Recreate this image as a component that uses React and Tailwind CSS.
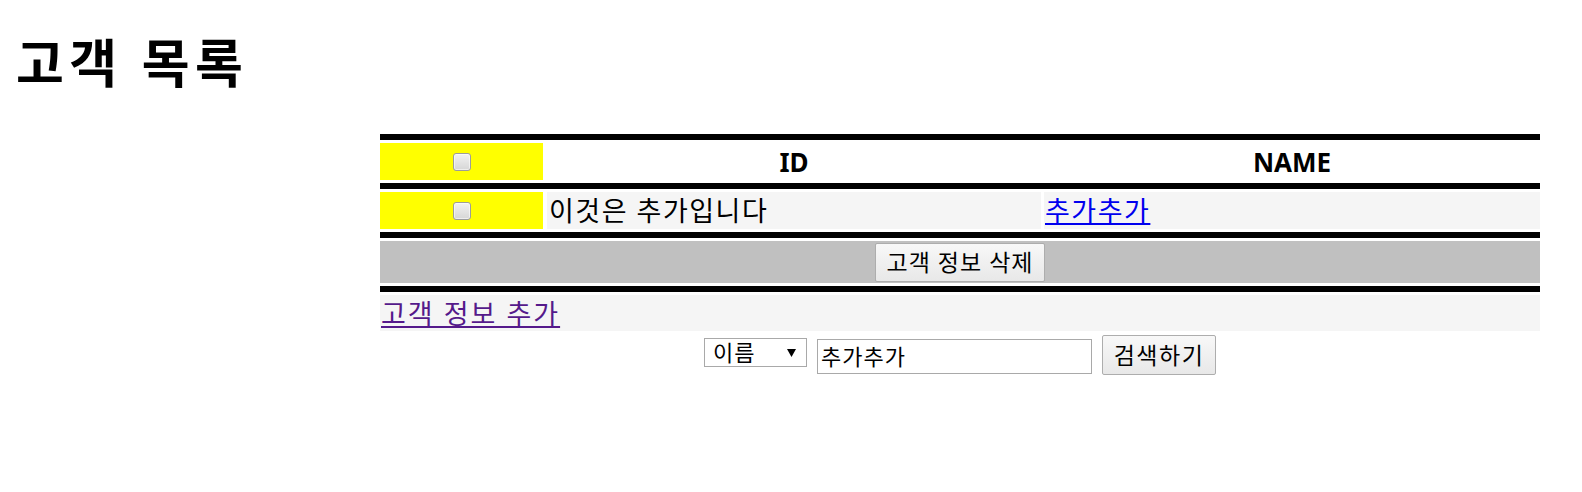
import { useState } from "react";

const Checkbox = () => (
  <span className="block w-[18px] h-[18px] rounded-[3px] border border-[#9c9c9c] bg-linear-to-b from-[#f2f2f2] to-[#d6d6d6] shadow-[inset_0_0_0_1px_rgba(255,255,255,0.55)]" />
);

const Bar = () => <div className="h-[6px] bg-black" />;

export default function App() {
  const [field] = useState("이름");
  const [keyword] = useState("추가추가");

  return (
    <div className="min-h-[492px] bg-white text-black font-['Noto_Sans','Noto_Sans_CJK_KR',sans-serif]">
      {/* title */}
      <div className="pt-[37px] pl-[16px]">
        <h1 className="text-[52px] leading-[52px] font-bold tracking-[5.5px]">고객 목록</h1>
      </div>

      {/* customer table */}
      <div className="mt-[45px] ml-[380px] w-[1160px] flex flex-col gap-[3px]">
        <Bar />
        <div className="h-[37px] flex">
          <div className="w-[163px] bg-[#ffff00] flex items-center justify-center">
            <Checkbox />
          </div>
          <div className="ml-[4px] flex-1 flex items-center justify-center pt-[2px] text-[26px] font-bold">ID</div>
          <div className="ml-[3px] w-[496px] flex items-center justify-center pt-[2px] text-[26px] font-bold">NAME</div>
        </div>

        <Bar />
        <div className="h-[37px] flex text-[27px] tracking-[1.5px]">
          <div className="w-[163px] bg-[#ffff00] flex items-center justify-center">
            <Checkbox />
          </div>
          <div className="ml-[4px] flex-1 bg-[#f5f5f5] flex items-center pl-[2px] pt-[2px]">이것은 추가입니다</div>
          <div className="ml-[3px] w-[496px] bg-[#f5f5f5] flex items-center pl-[1px] pt-[2px]">
            <a href="#" className="text-[#0000ee] underline">추가추가</a>
          </div>
        </div>

        <Bar />
        <div className="h-[42px] bg-[#c0c0c0] flex items-center justify-center">
          <button className="w-[170px] h-[39px] mt-[1px] text-[23px] tracking-[1px] border border-[#adadad] rounded-[2px] bg-linear-to-b from-[#f8f8f8] to-[#e8e8e8]">
            고객 정보 삭제
          </button>
        </div>

        <Bar />
        <div className="h-[36px] bg-[#f5f5f5] flex items-center text-[27px] tracking-[2px] pl-[1px] pt-[3px]">
          <a href="#" className="text-[#551a8b] underline">고객 정보 추가</a>
        </div>

        {/* search */}
        <div className="mt-[1px] flex justify-center items-start gap-[10px]">
          <div className="mt-[3px] w-[103px] h-[29px] border border-[#a9a9a9] bg-white flex items-center justify-between pl-[8px] pr-[10px] text-[22px] tracking-[1px]">
            <span>{field}</span>
            <svg width="9" height="8" viewBox="0 0 9 8">
              <polygon points="0,0 9,0 4.5,8" fill="#000" />
            </svg>
          </div>
          <div className="mt-[4px] w-[275px] h-[35px] border border-[#a9a9a9] bg-white flex items-center pl-[3px] text-[22px] tracking-[1px]">
            {keyword}
          </div>
          <button className="w-[114px] h-[40px] text-[23px] tracking-[1.5px] border border-[#adadad] rounded-[2px] bg-linear-to-b from-[#f8f8f8] to-[#e8e8e8]">
            검색하기
          </button>
        </div>
      </div>
    </div>
  );
}
